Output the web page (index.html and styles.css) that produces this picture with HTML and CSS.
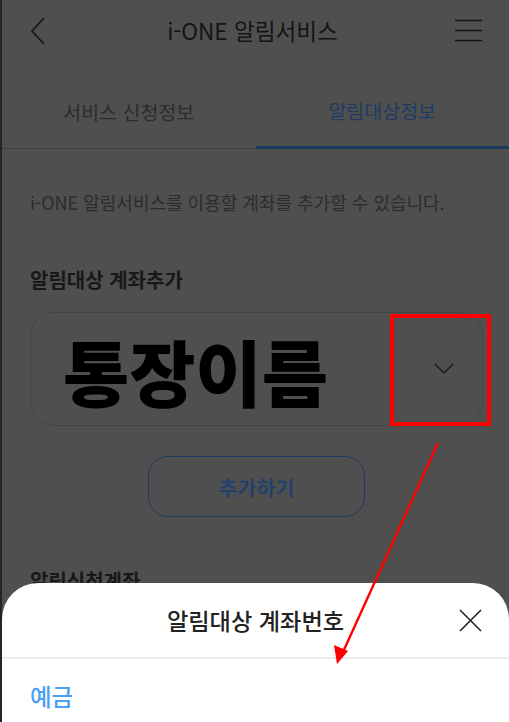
FILE: index.html
```html
<!DOCTYPE html>
<html lang="ko">
<head>
<meta charset="utf-8">
<title>i-ONE 알림서비스</title>
<link rel="stylesheet" href="styles.css">
</head>
<body>
<div class="screen">
  <header class="topbar">
    <svg class="back" width="16" height="28" viewBox="0 0 16 28"><path d="M14 1 L2 14 L14 27" fill="none" stroke="#151515" stroke-width="1.6"/></svg>
    <h1 class="title">i-ONE 알림서비스</h1>
    <svg class="menu" width="27" height="23" viewBox="0 0 27 23"><path d="M0 1.5H27M0 11.5H27M0 21.5H27" stroke="#151515" stroke-width="1.6"/></svg>
  </header>
  <nav class="tabs">
    <div class="tab">서비스 신청정보</div>
    <div class="tab active">알림대상정보</div>
  </nav>
  <main class="content">
    <p class="desc">i-ONE 알림서비스를 이용할 계좌를 추가할 수 있습니다.</p>
    <h2 class="sec-title">알림대상 계좌추가</h2>
    <div class="select">
      <span class="select-label">통장이름</span>
      <svg class="select-arrow" width="20" height="12" viewBox="0 0 20 12"><path d="M1 1 L10 10 L19 1" fill="none" stroke="#1a1a1a" stroke-width="1.5"/></svg>
      <span class="mark-box"></span>
    </div>
    <div class="btn-row"><button class="btn-add">추가하기</button></div>
    <h2 class="sec-title sec-title2">알림신청계좌</h2>
  </main>

  <section class="sheet">
    <div class="sheet-head">
      <h3 class="sheet-title">알림대상 계좌번호</h3>
      <svg class="close" width="23" height="23" viewBox="0 0 23 23"><path d="M1 1 L22 22 M22 1 L1 22" stroke="#222" stroke-width="1.6"/></svg>
    </div>
    <ul class="sheet-list">
      <li class="sheet-item">예금</li>
    </ul>
  </section>

  <svg class="pointer" width="509" height="722" viewBox="0 0 509 722">
    <line x1="438" y1="443" x2="343" y2="652" stroke="#ff0000" stroke-width="2.4"/>
    <polygon points="337,664 334,645 348,651" fill="#ff0000"/>
  </svg>
</div>
</body>
</html>
```

FILE: styles.css
```css
html, body {
  margin: 0;
  padding: 0;
}
body {
  width: 509px;
  height: 722px;
  overflow: hidden;
  font-family: "Noto Sans CJK KR", "Noto Sans", sans-serif;
}
.screen {
  position: relative;
  width: 507px;
  height: 722px;
  background: #4f4f4f;
  border-left: 2px solid #252525;
  overflow: hidden;
}
.topbar {
  height: 61px;
  display: flex;
  align-items: center;
  justify-content: space-between;
  padding: 0 27px 1px 28px;
}
.title {
  margin: 0;
  font-size: 22.6px;
  font-weight: 400;
  color: #141414;
  padding-left: 4px;
}
.tabs {
  display: flex;
  border-bottom: 1px solid #404040;
}
.tab {
  flex: 1;
  height: 74px;
  padding-top: 12px;
  display: flex;
  align-items: center;
  justify-content: center;
  font-size: 19.5px;
  color: #2c2c2c;
}
.tab.active {
  color: #1d3b64;
  border-bottom: 3px solid #1d3a60;
  margin-bottom: -1px;
  height: 72px;
}
.content {
  padding: 0 26px 0 28px;
}
.desc {
  margin: 41px 0 0;
  font-size: 18px;
  line-height: 24px;
  color: #2c2c2c;
}
.sec-title {
  margin: 53px 0 0;
  font-size: 20px;
  line-height: 26px;
  font-weight: 700;
  color: #181818;
}
.select {
  position: relative;
  margin-top: 19px;
  height: 112px;
  border: 1px solid #444;
  border-radius: 24px;
  display: flex;
  align-items: center;
  padding: 0 28px 0 32px;
  justify-content: space-between;
}
.select-label {
  font-size: 72px;
  font-weight: 900;
  color: #000;
  line-height: 1;
  margin-top: 1px;
}
.mark-box {
  position: absolute;
  left: 359px;
  top: 1px;
  width: 93px;
  height: 104px;
  border: 4px solid #ff0000;
}
.btn-row {
  display: flex;
  justify-content: center;
  margin-top: 30px;
}
.btn-add {
  width: 217px;
  height: 61px;
  border: 1.5px solid #1d3a62;
  border-radius: 20px;
  background: transparent;
  font-family: inherit;
  font-size: 20.6px;
  font-weight: 700;
  color: #22416b;
}
.sec-title2 {
  margin-top: 51px;
}
.sheet {
  position: absolute;
  left: 0;
  right: 0;
  bottom: 0;
  height: 139px;
  background: #fff;
  border-radius: 36px 36px 0 0;
}
.sheet-head {
  position: relative;
  height: 74px;
  display: flex;
  align-items: center;
  justify-content: center;
  border-bottom: 2px solid #ececec;
}
.sheet-title {
  margin: 0;
  font-size: 23.2px;
  font-weight: 500;
  color: #222;
}
.close {
  position: absolute;
  right: 27px;
  top: 26px;
}
.sheet-list {
  list-style: none;
  margin: 0;
  padding: 22px 28px 0;
}
.sheet-item {
  font-size: 23.5px;
  line-height: 30px;
  font-weight: 500;
  color: #4aa0f5;
}
.pointer {
  position: absolute;
  left: -2px;
  top: 0;
}
```
